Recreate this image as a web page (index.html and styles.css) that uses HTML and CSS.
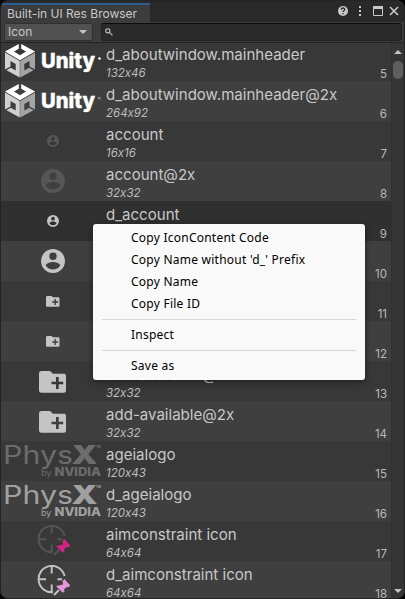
FILE: index.html
```html
<!DOCTYPE html>
<html lang="en">
<head>
<meta charset="utf-8">
<title>Built-in UI Res Browser</title>
<link rel="stylesheet" href="styles.css">
</head>
<body>
<svg class="defs" aria-hidden="true">
  <symbol id="unity" viewBox="0 0 102 40">
    <path fill="#fff" d="M18.800 3v4.800L14 10.600l6 3.600 6-3.600-4.800-2.800V3L35 10.500 20 19.300 5 10.500z"/>
    <path fill="#d0d0d0" d="M5 11.400l14.800 8.600v16.500L6.500 29.300l4.200-2.500 5 2.800v-6.600L10.500 20v5.400L5 28.400z"/>
    <path fill="#a4a4a4" d="M35 11.400l-14.800 8.600v16.500l13.300-7.200-4.200-2.500-5 2.800v-6.600l5.200-3v5.400l5.500 3z"/>
    <text x="41" y="27" class="unity-word" textLength="54" lengthAdjust="spacingAndGlyphs">Unity</text>
  </symbol>
  <symbol id="account" viewBox="0 0 24 24">
    <path fill="currentColor" fill-rule="evenodd" d="M12 0a12 12 0 1 0 0 24a12 12 0 0 0 0-24zM12 3.600a3.700 3.700 0 1 1 0 7.400a3.700 3.700 0 0 1 0-7.400zM12 20.500c-3 0-5.700-1.500-7.200-3.800c0-2.400 4.800-3.700 7.200-3.700s7.200 1.300 7.200 3.700c-1.500 2.300-4.200 3.800-7.200 3.800z"/>
  </symbol>
  <symbol id="folder" viewBox="0 0 28 22">
    <path fill="currentColor" fill-rule="evenodd" d="M2.500 0H11l3 2.700h11q2 0 2 2v15q0 2-2 2H2.500Q0 21.700 0 19.200V2.500Q0 0 2.500 0zM17 6v4.700h-4.500v2.600H17V18h2.700v-4.700h4.500v-2.600h-4.500V6z"/>
  </symbol>
  <symbol id="physx" viewBox="0 0 100 36">
    <text x="-1" y="20" class="physx-thin" textLength="70" lengthAdjust="spacingAndGlyphs">Phys</text>
    <text x="67.500" y="20" class="physx-bold" textLength="26" lengthAdjust="spacingAndGlyphs">X</text>
    <text x="92" y="4" class="physx-tm">TM</text>
    <text x="37" y="32" class="physx-by">by</text>
    <text x="50.500" y="32" class="physx-nv" textLength="46.500" lengthAdjust="spacingAndGlyphs">NVIDIA</text>
  </symbol>
  <symbol id="aim" viewBox="0 0 34 32">
    <path fill="none" stroke="currentColor" stroke-width="1.900" d="M27.600 11A13.200 13.200 0 1 0 16 27.200M14.700 1v7.500M14.700 19.500V27M1.500 14.300H9M20.500 14.300H25M17 30l5-5"/>
    <path class="pin" d="M19 21l7-1.500-.5-3.500 2-2 2.500 3 3 3-1 2-3 .5-2 2 .5 2.500-2 .5z"/>
  </symbol>
</svg>

<main class="window">
  <header class="titlebar">
    <div class="tab">Built-in UI Res Browser</div>
    <svg class="controls" viewBox="0 0 70 22">
      <circle cx="8" cy="11" r="5" fill="#c8c8c8"/>
      <path d="M6.300 9.800q0-1.800 1.700-1.800t1.700 1.500q0 .8-.9 1.300-.8.400-.8 1.200M8 13v1.300" fill="none" stroke="#292929" stroke-width="1.300"/>
      <path d="M24 6h2v2h-2zM24 10h2v2h-2zM24 14h2v2h-2z" fill="#c8c8c8"/>
      <path d="M38.500 6.500h9v9h-9z" fill="none" stroke="#c8c8c8"/>
      <path d="M38 6h10v3H38z" fill="#c8c8c8"/>
      <path d="M55 7l8 8M63 7l-8 8" fill="none" stroke="#c8c8c8" stroke-width="1.600"/>
    </svg>
  </header>
  <div class="toolbar">
    <div class="select">Icon<svg viewBox="0 0 8 4"><path fill="#c4c4c4" d="M0 0h8L4 4z"/></svg></div>
    <div class="search"><svg viewBox="0 0 8 8"><circle cx="2.800" cy="2.800" r="2.100"/><path d="M4.400 4.400l3 3"/></svg></div>
  </div>
  <div class="content">
    <div class="list">
      <div class="row"><svg class="ic unity"><use href="#unity"/><circle cx="99.500" cy="17.500" r="1.300" fill="#fff"/></svg><div class="label"><b>d_aboutwindow.mainheader</b><i>132x46</i></div><span>5</span></div>
      <div class="row"><svg class="ic unity"><use href="#unity"/><path d="M98 16l2.500 2.500M100.500 16l-2.500 2.500" stroke="#bbb" stroke-width=".8"/></svg><div class="label"><b>d_aboutwindow.mainheader@2x</b><i>264x92</i></div><span>6</span></div>
      <div class="row"><svg class="ic s12 dim"><use href="#account"/></svg><div class="label"><b>account</b><i>16x16</i></div><span>7</span></div>
      <div class="row"><svg class="ic s24 dim"><use href="#account"/></svg><div class="label"><b>account@2x</b><i>32x32</i></div><span>8</span></div>
      <div class="row hover"><svg class="ic s12"><use href="#account"/></svg><div class="label"><b>d_account</b><i>16x16</i></div><span>9</span></div>
      <div class="row"><svg class="ic s24"><use href="#account"/></svg><div class="label"><b>d_account@2x</b><i>32x32</i></div><span>10</span></div>
      <div class="row"><svg class="ic f14"><use href="#folder"/></svg><div class="label"><b>add-available</b><i>16x16</i></div><span>11</span></div>
      <div class="row"><svg class="ic f14"><use href="#folder"/></svg><div class="label"><b>add-available</b><i>16x16</i></div><span>12</span></div>
      <div class="row"><svg class="ic f28"><use href="#folder"/></svg><div class="label"><b>add-available@2x</b><i>32x32</i></div><span>13</span></div>
      <div class="row"><svg class="ic f28"><use href="#folder"/></svg><div class="label"><b>add-available@2x</b><i>32x32</i></div><span>14</span></div>
      <div class="row"><svg class="ic physx dark"><use href="#physx"/></svg><div class="label"><b>ageialogo</b><i>120x43</i></div><span>15</span></div>
      <div class="row"><svg class="ic physx"><use href="#physx"/></svg><div class="label"><b>d_ageialogo</b><i>120x43</i></div><span>16</span></div>
      <div class="row"><svg class="ic aim dim magenta"><use href="#aim"/></svg><div class="label"><b>aimconstraint icon</b><i>64x64</i></div><span>17</span></div>
      <div class="row"><svg class="ic aim pink"><use href="#aim"/></svg><div class="label"><b>d_aimconstraint icon</b><i>64x64</i></div><span>18</span></div>
    </div>
    <div class="scrollbar"><div class="arrow up"></div><div class="thumb"></div><div class="arrow down"></div></div>
  </div>
</main>

<nav class="menu">
  <div class="item">Copy IconContent Code</div>
  <div class="item">Copy Name without 'd_' Prefix</div>
  <div class="item">Copy Name</div>
  <div class="item">Copy File ID</div>
  <hr>
  <div class="item">Inspect</div>
  <hr>
  <div class="item">Save as</div>
</nav>
</body>
</html>
```
FILE: styles.css
```css
* { box-sizing: border-box; }
body { margin: 0; background: #050505; font-family: Inter, sans-serif; font-feature-settings: "calt" 0; color: #c8c8c8; overflow: hidden; }
.defs { position: absolute; width: 0; height: 0; }
.window { width: 405px; height: 599px; border: 1px solid #242424; border-radius: 8px; overflow: hidden; background: #383838; display: flex; flex-direction: column; }
.titlebar { height: 21px; flex: none; background: #292929; display: flex; justify-content: space-between; align-items: flex-start; }
.tab { width: 149px; height: 19px; margin-top: 2px; border-top: 2px solid #2c5d8f; background: #3c3c3c; padding-left: 6px; font-size: 12px; line-height: 18px; white-space: nowrap; }
.controls { width: 70px; height: 22px; margin-right: -1px; margin-top: -1px; }
.toolbar { height: 21px; flex: none; background: #3c3c3c; border-bottom: 1px solid #232323; display: flex; padding: 1px 2px 0 3px; gap: 8px; }
.select { width: 89px; height: 18px; border: 1px solid #303030; border-radius: 3px; background: #515151; padding: 0 5px 0 3px; display: flex; align-items: center; justify-content: space-between; font-size: 12px; line-height: 16px; }
.select svg { width: 8px; height: 4px; }
.search { flex: 1; height: 18px; border: 1px solid #212121; border-top-color: #0d0d0d; border-radius: 3px; background: #2a2a2a; display: flex; align-items: center; padding-left: 3px; }
.search svg { width: 8px; height: 8px; fill: none; stroke: #c4c4c4; stroke-width: 1.100; }
.content { flex: 1; min-height: 0; display: flex; overflow: hidden; }
.list { flex: 1; margin-top: -2px; }
.row { height: 40px; display: flex; align-items: center; background: #383838; }
.row:nth-child(even) { background: #3f3f3f; }
.row.hover { background: #303030; }
.ic { color: #c4c4c4; flex: none; display: block; overflow: visible; }
.ic.dim { color: #565656; }
.s12 { width: 12px; height: 12px; margin: 0 46px; }
.s24 { width: 24px; height: 24px; margin: 0 40px; }
.f14 { width: 14px; height: 11px; margin: 1px 45px 0; }
.f28 { width: 28px; height: 22px; margin: 2px 38px 0; }
.unity { width: 102px; height: 40px; margin-left: -1px; margin-right: 3px; }
.physx { width: 100px; height: 36px; margin: 2px 1px 0 3px; color: #a0a0a0; }
.physx.dark { color: #6c6c6c; }
.aim { width: 34px; height: 32px; margin: 0 34px 0 36px; }
.magenta { --pin: #cf2480; }
.pink { --pin: #e594d8; }
.pin { fill: var(--pin); }
.unity-word { font: 800 20.500px Inter, sans-serif; fill: #fff; stroke: #fff; stroke-width: .4px; }
.physx-thin { font: 400 25px Inter, sans-serif; fill: currentColor; }
.physx-bold { font: 900 26px Inter, sans-serif; fill: currentColor; }
.physx-tm { font: 700 3px Inter, sans-serif; fill: currentColor; }
.physx-by { font: 400 9px Inter, sans-serif; fill: currentColor; }
.physx-nv { font: 800 12px Inter, sans-serif; fill: currentColor; }
.label { flex: 1; align-self: stretch; padding: 4px 0 0 1px; display: flex; flex-direction: column; white-space: nowrap; }
.label b { font-weight: 400; font-size: 15.050px; line-height: 20px; }
.label i { font-size: 11.500px; line-height: 16px; color: #bcbcbc; }
.row span { align-self: flex-end; margin: 0 4px 0 0; font-size: 11.500px; line-height: 14px; color: #bababa; }
.scrollbar { width: 13px; background: #353535; border-left: 1px solid #303030; display: flex; flex-direction: column; align-items: center; padding: 7px 0 5px; }
.arrow { width: 0; height: 0; border: 4px solid transparent; }
.up { border-top: 0; border-bottom-color: #c4c4c4; }
.down { border-bottom: 0; border-top-color: #c4c4c4; margin-top: auto; }
.thumb { width: 10px; height: 18px; border-radius: 5px; background: #5f5f5f; margin-top: 7px; }
.menu { position: absolute; left: 93px; top: 224px; width: 272px; height: 156px; padding: 3px 9px; border-radius: 3px; background: #f9f9f9; box-shadow: 0 2px 7px rgba(0,0,0,.45); color: #000; font: 12px "Noto Sans", sans-serif; }
.item { height: 22px; line-height: 22px; padding-left: 29px; white-space: nowrap; letter-spacing: .24px; }
.menu hr { height: 1px; margin: 4px 0; border: 0; background: #d7d7d7; }
```
